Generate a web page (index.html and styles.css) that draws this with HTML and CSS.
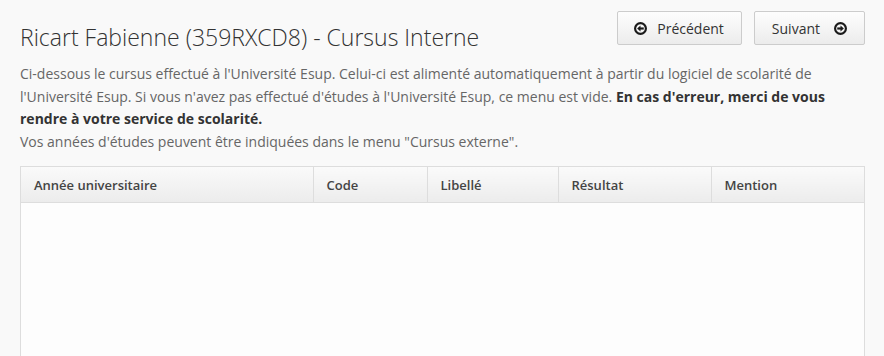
FILE: index.html
```html
<!DOCTYPE html>
<html lang="fr">
<head>
  <meta charset="UTF-8">
  <title>Cursus Interne</title>
  <link rel="stylesheet" href="styles.css">
</head>
<body>
  <div class="page">
    <div class="page-header">
      <h1>Ricart Fabienne (359RXCD8) - Cursus Interne</h1>
      <div class="nav-buttons">
        <button class="btn">
          <svg class="icon" viewBox="0 0 12 12"><circle cx="6" cy="6" r="5"/><path class="arrow" d="M9 6H5"/><path class="head" d="M6 3.3 2.9 6 6 8.7z"/></svg>
          Précédent
        </button>
        <button class="btn btn-next">
          Suivant
          <svg class="icon icon-right" viewBox="0 0 12 12"><circle cx="6" cy="6" r="5"/><path class="arrow" d="M3 6h4"/><path class="head" d="M6 3.3 9.1 6 6 8.7z"/></svg>
        </button>
      </div>
    </div>

    <p class="intro">
      Ci-dessous le cursus effectué à l'Université Esup. Celui-ci est alimenté automatiquement à partir du logiciel de scolarité de l'Université Esup. Si vous n'avez pas effectué d'études à l'Université Esup, ce menu est vide. <strong>En cas d'erreur, merci de vous rendre à votre service de scolarité.</strong><br>
      Vos années d'études peuvent être indiquées dans le menu "Cursus externe".
    </p>

    <div class="table-box">
      <table class="cursus">
        <thead>
          <tr>
            <th class="col-year">Année universitaire</th>
            <th class="col-code">Code</th>
            <th class="col-label">Libellé</th>
            <th class="col-result">Résultat</th>
            <th>Mention</th>
          </tr>
        </thead>
        <tbody></tbody>
      </table>
    </div>
  </div>
</body>
</html>
```

FILE: styles.css
```css
body {
  margin: 0;
  font-family: "Open Sans", "Liberation Sans", sans-serif;
  background: #f9f9f9;
  color: #555;
}

.page {
  padding: 0 19px 0 20px;
}

.page-header {
  display: flex;
  justify-content: space-between;
  align-items: flex-start;
}

h1 {
  margin: 20px 0 0;
  font-size: 23px;
  font-weight: 300;
  color: #333;
  line-height: 34px;
}

.nav-buttons {
  display: flex;
  gap: 12px;
  margin-top: 11px;
}

.btn {
  display: flex;
  align-items: center;
  gap: 10px;
  height: 34px;
  padding: 0 17px 0 16px;
  font-family: inherit;
  font-size: 14px;
  color: #333;
  background: linear-gradient(#fdfdfd, #ececec);
  border: 1px solid #ccc;
  border-radius: 2px;
  cursor: pointer;
}

.btn-next {
  padding: 0 17px 0 17px;
}

.icon {
  width: 13px;
  height: 13px;
}

.icon circle,
.icon .arrow {
  fill: none;
  stroke: #1a1a1a;
  stroke-width: 2;
}

.icon .head {
  fill: #1a1a1a;
}

.icon-right {
  margin-left: 4px;
}

.intro {
  margin: 9px 0 13px;
  font-size: 14px;
  line-height: 22.6px;
  color: #666;
}

.intro strong {
  color: #333;
}

.table-box {
  min-height: 300px;
  background: #fdfdfd;
  border: 1px solid #ddd;
  border-bottom: none;
}

.cursus {
  width: 100%;
  table-layout: fixed;
  border-collapse: collapse;
}

.cursus th {
  box-sizing: border-box;
  height: 35px;
  padding: 0 13px;
  text-align: left;
  font-size: 13px;
  font-weight: 600;
  color: #444;
  background: linear-gradient(#fafafa, #ececec);
  border-bottom: 1px solid #ddd;
  border-left: 1px solid #ddd;
}

.cursus th:first-child {
  border-left: none;
}

.col-year { width: 292px; }
.col-code { width: 114px; }
.col-label { width: 131px; }
.col-result { width: 153px; }
```
